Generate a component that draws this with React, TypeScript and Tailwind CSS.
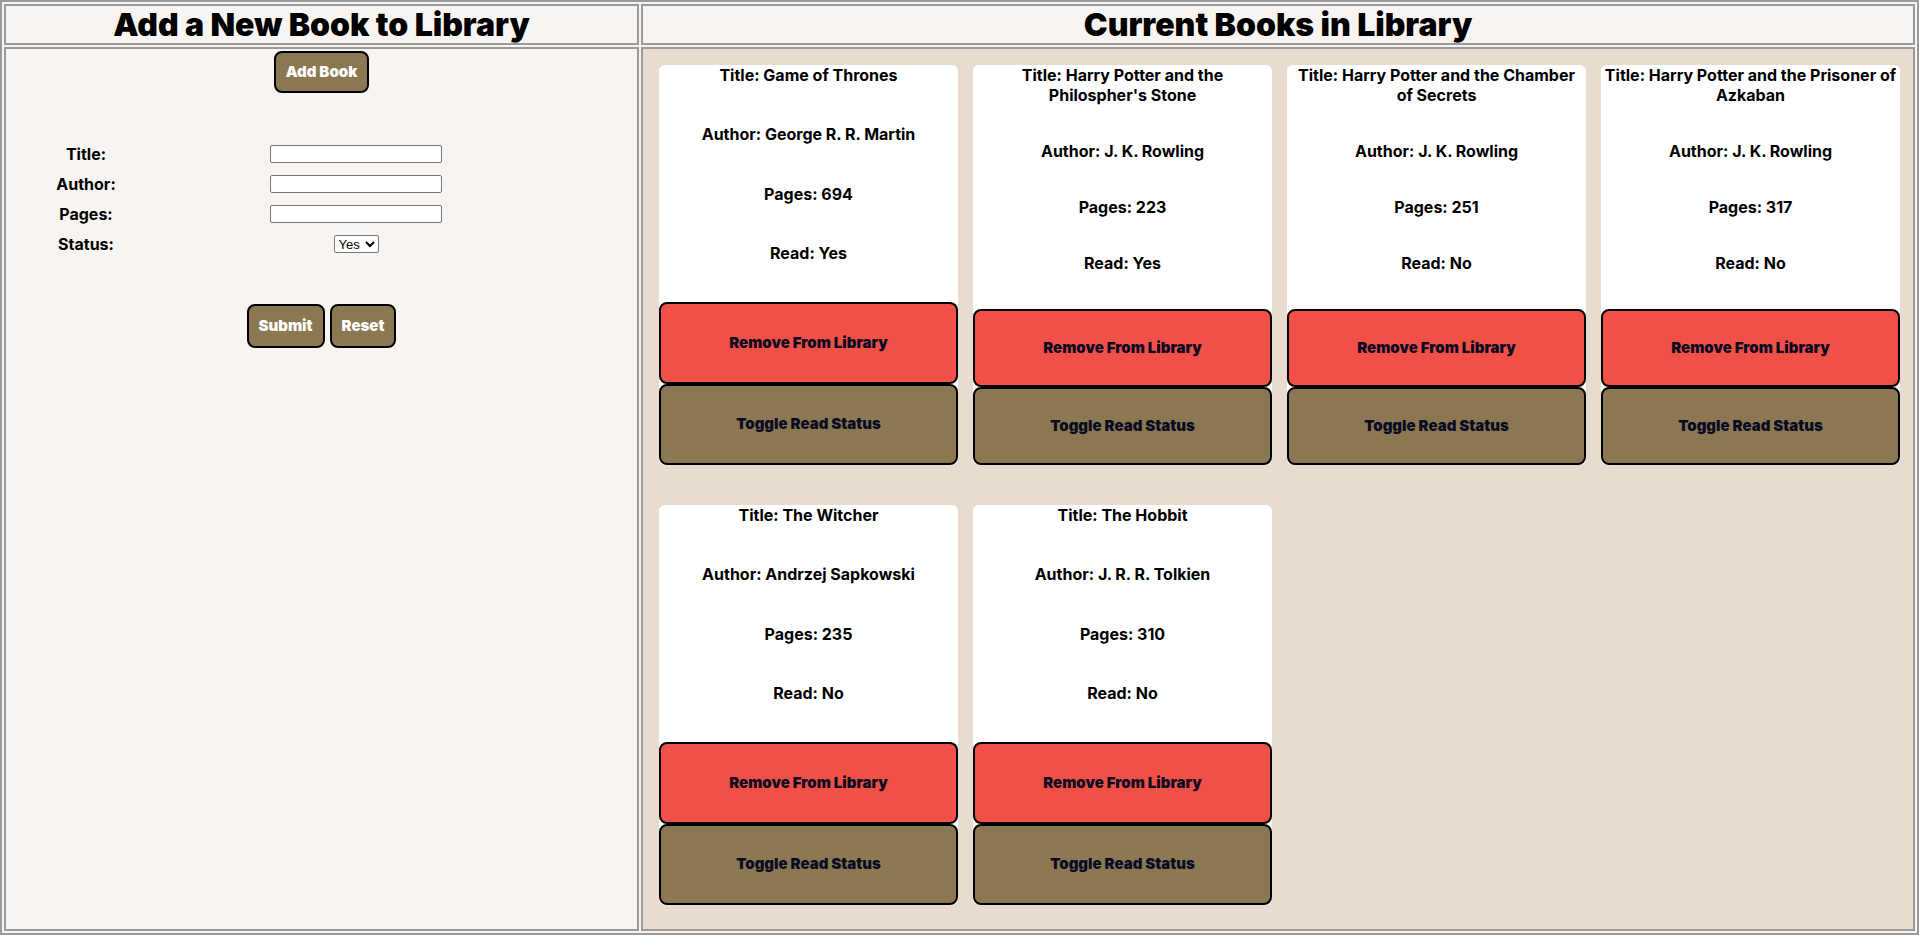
type Book = {
  title: string;
  author: string;
  pages: number;
  read: boolean;
};

const books: Book[] = [
  { title: "Game of Thrones", author: "George R. R. Martin", pages: 694, read: true },
  { title: "Harry Potter and the Philospher's Stone", author: "J. K. Rowling", pages: 223, read: true },
  { title: "Harry Potter and the Chamber of Secrets", author: "J. K. Rowling", pages: 251, read: false },
  { title: "Harry Potter and the Prisoner of Azkaban", author: "J. K. Rowling", pages: 317, read: false },
  { title: "The Witcher", author: "Andrzej Sapkowski", pages: 235, read: false },
  { title: "The Hobbit", author: "J. R. R. Tolkien", pages: 310, read: false },
];

const fields: string[] = ["Title:", "Author:", "Pages:"];

function BookCard({ book }: { book: Book }) {
  return (
    <div className="h-[400px] bg-white rounded-[6px] flex flex-col text-center text-[16px] font-bold text-black">
      <p className="grow px-[2.5px] leading-[20px]">Title: {book.title}</p>
      <p className="grow leading-[20px]">Author: {book.author}</p>
      <p className="grow leading-[20px]">Pages: {book.pages}</p>
      <p className="grow leading-[20px]">Read: {book.read ? "Yes" : "No"}</p>
      <button className="grow py-[9px] border-2 border-black rounded-[8px] bg-[#f05045] text-[15px] font-black leading-[20px] text-[#0a0a23] cursor-pointer">
        Remove From Library
      </button>
      <button className="grow py-[9px] border-2 border-black rounded-[8px] bg-[#8b7853] text-[15px] font-black leading-[20px] text-[#0a0a23] cursor-pointer">
        Toggle Read Status
      </button>
    </div>
  );
}

export default function App() {
  return (
    <div className="h-screen border-2 border-[#9a9a9a] bg-[#f8f4f1] p-[2px] grid grid-cols-[635px_1fr] grid-rows-[41px_1fr] gap-[2px] font-['Inter',sans-serif] text-black">
      {/* Headers */}
      <div className="border-2 border-[#9a9a9a] bg-[#f8f4f1] flex items-center justify-center">
        <h1 className="text-[32px] font-black leading-none">Add a New Book to Library</h1>
      </div>
      <div className="border-2 border-[#9a9a9a] bg-[#f8f4f1] flex items-center justify-center">
        <h1 className="text-[32px] font-black leading-none">Current Books in Library</h1>
      </div>

      {/* Form side */}
      <div className="border-2 border-[#9a9a9a] bg-[#f8f4f1] flex flex-col items-center">
        <button className="mt-[2px] h-[42px] px-[10px] border-2 border-black rounded-[8px] bg-[#8b7853] text-white text-[15px] font-black leading-[20px] cursor-pointer">
          Add Book
        </button>

        <div className="mt-[52px] self-stretch grid grid-cols-[160px_380px] gap-y-[12px] items-center">
          {fields.map((label: string) => (
            <div key={label} className="contents">
              <span className="text-center text-[16px] font-bold leading-[18px]">{label}</span>
              <div className="flex justify-center">
                <input
                  type="text"
                  className="w-[172px] h-[18px] bg-white border border-[#767676] rounded-[2px] px-[2px] text-[13px]"
                />
              </div>
            </div>
          ))}
          <span className="text-center text-[16px] font-bold leading-[18px]">Status:</span>
          <div className="flex justify-center">
            <select className="w-[45px] h-[18px] bg-white border border-[#767676] rounded-[2px] text-[13px] leading-[16px] font-['Liberation_Sans',Arial,sans-serif] font-normal">
              <option>Yes</option>
              <option>No</option>
            </select>
          </div>
        </div>

        <div className="mt-[51px] flex gap-[5px] justify-center">
          <button className="h-[44px] px-[10px] border-2 border-black rounded-[8px] bg-[#8b7853] text-white text-[15px] font-black leading-[20px] cursor-pointer">
            Submit
          </button>
          <button className="h-[44px] px-[10px] border-2 border-black rounded-[8px] bg-[#8b7853] text-white text-[15px] font-black leading-[20px] cursor-pointer">
            Reset
          </button>
        </div>
      </div>

      {/* Library side */}
      <div className="border-2 border-[#9a9a9a] bg-[#e8dcd0] pt-[16px] pl-[16px]">
        <div className="grid grid-cols-[repeat(4,299px)] gap-x-[15px] gap-y-[40px] content-start">
          {books.map((book: Book) => (
            <BookCard key={book.title} book={book} />
          ))}
        </div>
      </div>
    </div>
  );
}
